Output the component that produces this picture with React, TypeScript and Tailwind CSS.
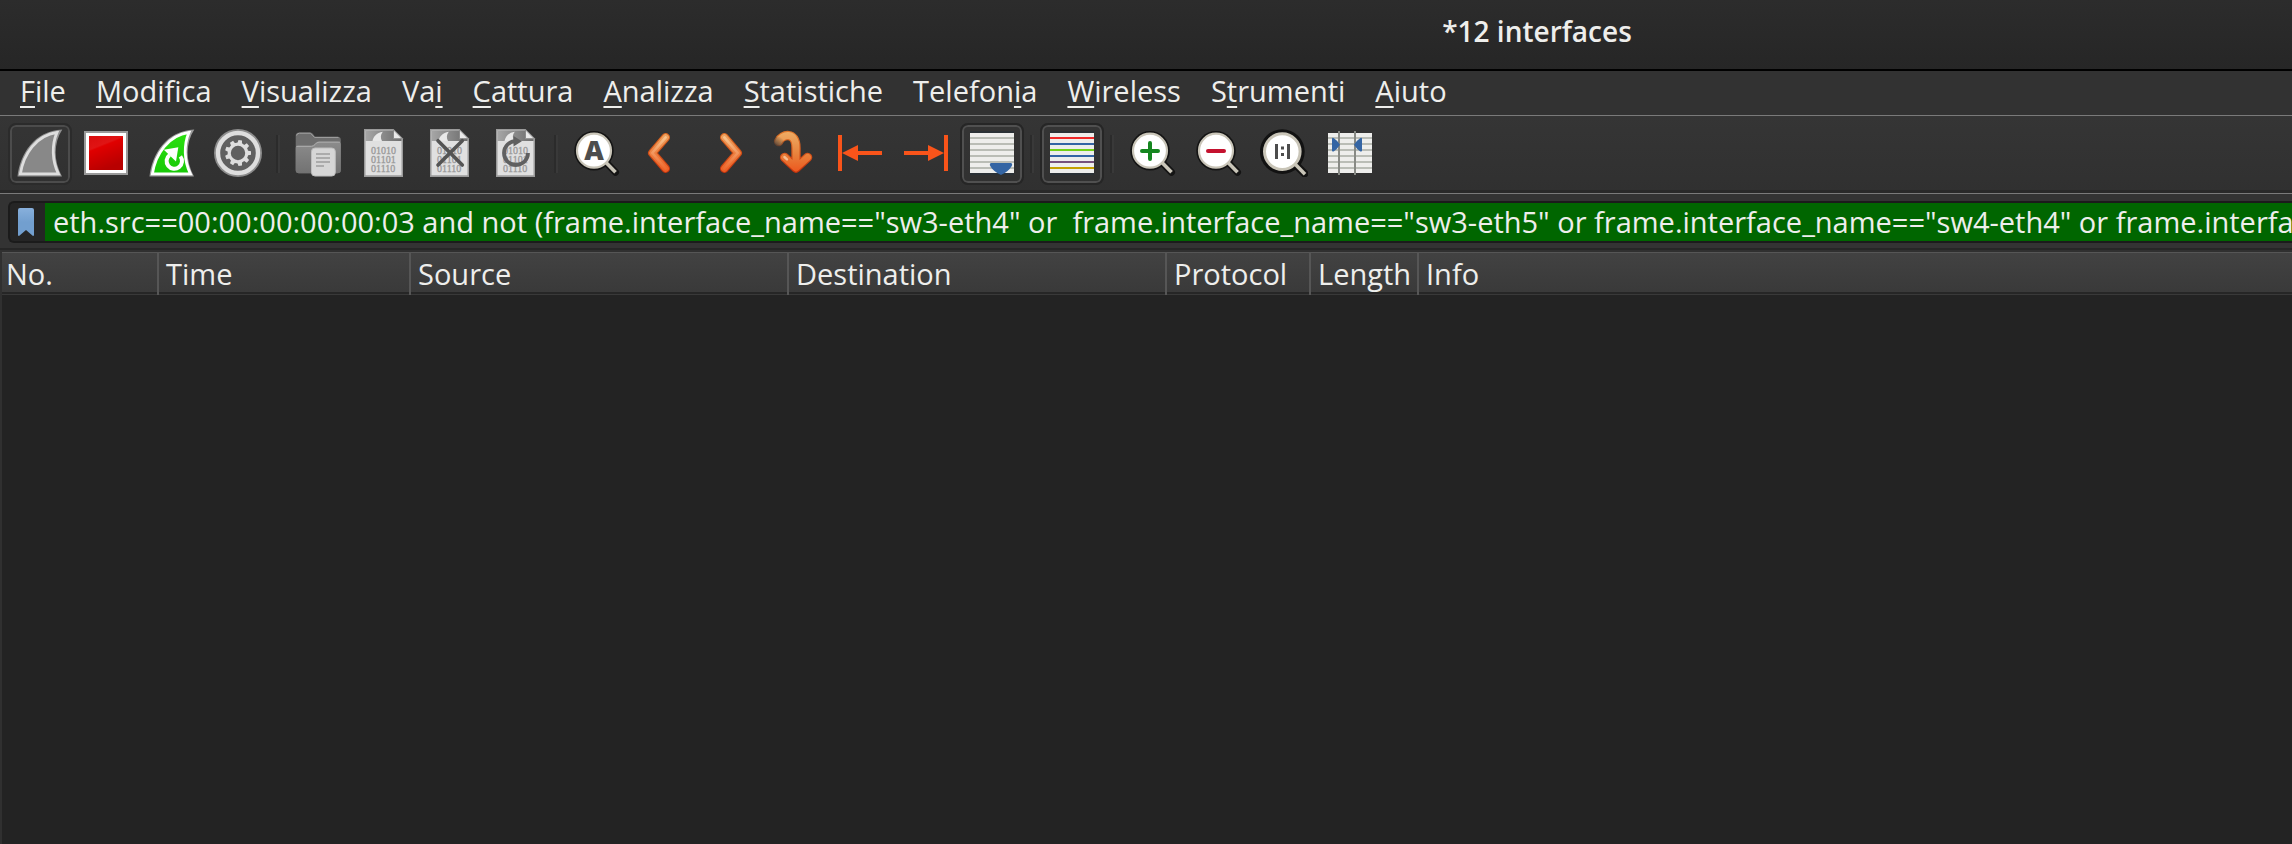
import React from "react";

type IconProps = { children: React.ReactNode };

function Icon({ children }: IconProps) {
  return (
    <svg viewBox="0 0 48 48" className="size-12 shrink-0" aria-hidden="true">
      {children}
    </svg>
  );
}

const FIN = "M1.5 47.5 C4 25 18 2 46.3 0.5 C37.5 14 37.5 32 46 47.5 Z";
const FIN_INNER = "M4.4 44.8 C7.5 25 20 6.5 41 3.4 C35.6 16 36 31.5 42.4 44.8 Z";

function StartIcon() {
  return (
    <Icon>
      <path d={FIN} fill="#8f8f8f" />
      <path d={FIN_INNER} fill="#888888" stroke="#dedede" strokeWidth="2.8" />
    </Icon>
  );
}

function StopIcon() {
  return (
    <Icon>
      <defs>
        <linearGradient id="stop" x1="0" y1="0" x2="0.4" y2="1">
          <stop offset="0" stopColor="#d90d0d" />
          <stop offset="0.35" stopColor="#e01414" />
          <stop offset="0.4" stopColor="#e00000" />
          <stop offset="1" stopColor="#b80000" />
        </linearGradient>
      </defs>
      <rect x="2" y="2" width="44" height="44" fill="#9a9a9a" />
      <rect x="4" y="4" width="40" height="40" fill="#ffffff" />
      <rect x="7" y="7" width="34" height="34" fill="url(#stop)" />
    </Icon>
  );
}

function RestartIcon() {
  return (
    <Icon>
      <defs>
        <linearGradient id="restart" x1="0" y1="0" x2="0" y2="1">
          <stop offset="0" stopColor="#2be010" />
          <stop offset="1" stopColor="#18c808" />
        </linearGradient>
      </defs>
      <path d={FIN} fill="#9a9a9a" />
      <path d={FIN_INNER} fill="url(#restart)" stroke="#ffffff" strokeWidth="2.8" />
      <path d="M21.6 26 A7.7 7.7 0 1 0 32.4 27.4" fill="none" stroke="#ffffff" strokeWidth="4" />
      <path d="M15.8 20.8 L30.3 18.2 L28 32.4 Z" fill="#ffffff" />
    </Icon>
  );
}

const TEETH = [0, 40, 80, 120, 160, 200, 240, 280, 320];

function OptionsIcon() {
  return (
    <Icon>
      <circle cx="24" cy="24" r="24" fill="#8c8c8c" />
      <circle cx="24" cy="24" r="20" fill="#606060" stroke="#dedede" strokeWidth="4.4" />
      <g fill="#dedede">
        {TEETH.map((angle) => (
          <path key={angle} d="M21.6 15 L22.2 11 H25.8 L26.4 15 Z" transform={`rotate(${angle + 10} 24 24)`} />
        ))}
      </g>
      <circle cx="24" cy="24" r="8.8" fill="#606060" stroke="#dedede" strokeWidth="3.2" />
    </Icon>
  );
}

function OpenIcon() {
  return (
    <Icon>
      <defs>
        <linearGradient id="folder" x1="0" y1="0" x2="0" y2="1">
          <stop offset="0" stopColor="#8c8c8c" />
          <stop offset="1" stopColor="#727272" />
        </linearGradient>
      </defs>
      <path
        d="M1.7 7 Q1.7 3.5 5 3.5 H16.5 Q18 3.5 19 5 L21 7.7 H43.5 Q46.8 7.7 46.8 11 V41 Q46.8 44.3 43.5 44.3 H5 Q1.7 44.3 1.7 41 Z"
        fill="#6e6e6e"
      />
      <path d="M2.6 6.5 Q3 4.2 5.5 4.2 H16.5 L20.5 8.4 H44.5" fill="none" stroke="#a2a2a2" strokeWidth="1" />
      <path
        d="M1.7 19 Q1.7 16.5 4.5 16.5 H17 Q19 16.5 20.5 15 L22 13.5 Q23.2 12.4 25 12.4 H43.5 Q46.8 12.4 46.8 15.5 V41 Q46.8 44.3 43.5 44.3 H5 Q1.7 44.3 1.7 41 Z"
        fill="url(#folder)"
      />
      <path d="M2.4 17.4 H17.5 Q19.5 17.2 21 15.6 Q22.5 13.2 25 13.2 H46" fill="none" stroke="#acacac" strokeWidth="1" />
      <rect x="17.5" y="19" width="23.8" height="28" rx="3.5" fill="#d6d6d6" stroke="#bdbdbd" strokeWidth="1" />
      <path d="M22 25 H36 M22 29 H36 M22 33 H36 M22 37 H30" stroke="#ababab" strokeWidth="2" />
    </Icon>
  );
}

function FileIcon({ children, id }: { children?: React.ReactNode; id: string }) {
  return (
    <Icon>
      <defs>
        <linearGradient id={id} x1="0" y1="0" x2="1" y2="0">
          <stop offset="0" stopColor="#a6a6a6" />
          <stop offset="1" stopColor="#6c6c6c" />
        </linearGradient>
      </defs>
      <path d="M4 0 H33.5 L43 9.5 V48 H4 Z" fill="#9b9b9b" />
      <path d="M5.5 1.5 H33 L41.5 10 V46.3 H5.5 Z" fill="#e0e0e0" />
      <path d="M5.5 1.5 H33 L41.5 10 V12 H5.5 Z" fill={`url(#${id})`} />
      <path d="M12.5 12 C13.2 8 16.5 3.4 22.8 2.7 C20.4 5.5 20.4 9 22 12 Z" fill="#e8e8e8" />
      <path d="M33.5 0.8 V9.7 H42.3 Z" fill="#eaeaea" stroke="#8b8b8b" strokeWidth="1" />
      <g fill="#9a9a9a" stroke="#9a9a9a" strokeWidth="0.3" fontSize="10" fontFamily="'Liberation Serif', serif">
        <text x="11" y="24.5">01010</text>
        <text x="11" y="33.5">01101</text>
        <text x="11" y="42.5">01110</text>
      </g>
      {children}
    </Icon>
  );
}

function Lens({ children }: IconProps) {
  return (
    <Icon>
      <path d="M35 34.5 L43.5 43.2" stroke="#141414" strokeWidth="7" strokeLinecap="round" />
      <circle cx="22" cy="21.7" r="19.7" fill="#141414" />
      <path d="M34 33.5 L43.5 43.2" stroke="#c9c5b8" strokeWidth="3.6" />
      <circle cx="22" cy="21.7" r="17" fill="#ffffff" stroke="#c9c5b8" strokeWidth="2.2" />
      {children}
    </Icon>
  );
}

function NormalSizeIcon() {
  return (
    <Icon>
      <path d="M36 36 L44.6 44.6" stroke="#121212" strokeWidth="7.6" strokeLinecap="round" />
      <circle cx="22.3" cy="22.6" r="22.4" fill="#121212" />
      <path d="M35 35 L45 45.2" stroke="#c9c5b8" strokeWidth="3.6" />
      <circle cx="22.3" cy="22.6" r="17.8" fill="#ffffff" stroke="#c9c5b8" strokeWidth="3" />
      <path d="M15 15 h3 v15 h-3 Z M27 15 h3 v15 h-3 Z M21 17.6 h3 v3 h-3 Z M21 24 h3 v3 h-3 Z" fill="#4d4d4d" />
    </Icon>
  );
}

function ArrowStroke({ d, id }: { d: string; id: string }) {
  return (
    <Icon>
      <defs>
        <linearGradient id={id} gradientUnits="userSpaceOnUse" x1="0" y1="4" x2="0" y2="44">
          <stop offset="0" stopColor="#eda662" />
          <stop offset="1" stopColor="#ec5a20" />
        </linearGradient>
        <linearGradient id={`${id}-edge`} gradientUnits="userSpaceOnUse" x1="0" y1="4" x2="0" y2="44">
          <stop offset="0" stopColor="#d9661f" />
          <stop offset="1" stopColor="#c4330d" />
        </linearGradient>
        <linearGradient id={`${id}-shine`} gradientUnits="userSpaceOnUse" x1="0" y1="4" x2="0" y2="40">
          <stop offset="0" stopColor="#f8cf9a" />
          <stop offset="1" stopColor="#ee6a30" />
        </linearGradient>
      </defs>
      <g fill="none" strokeLinecap="round" strokeLinejoin="round">
        <path d={d} stroke={`url(#${id}-edge)`} strokeWidth="8.6" />
        <path d={d} stroke={`url(#${id})`} strokeWidth="6.4" />
        <path d={d} stroke={`url(#${id}-shine)`} strokeWidth="2.6" />
      </g>
    </Icon>
  );
}

function GoToIcon() {
  return (
    <Icon>
      <defs>
        <linearGradient id="goto" gradientUnits="userSpaceOnUse" x1="0" y1="4" x2="0" y2="42">
          <stop offset="0" stopColor="#eeaa62" />
          <stop offset="0.55" stopColor="#e8823c" />
          <stop offset="1" stopColor="#ec5a20" />
        </linearGradient>
        <linearGradient id="goto-edge" gradientUnits="userSpaceOnUse" x1="0" y1="4" x2="0" y2="42">
          <stop offset="0" stopColor="#dd7428" />
          <stop offset="1" stopColor="#c4330d" />
        </linearGradient>
        <linearGradient id="goto-tail" gradientUnits="userSpaceOnUse" x1="5" y1="18" x2="12" y2="9">
          <stop offset="0.1" stopColor="#343434" stopOpacity="0.85" />
          <stop offset="1" stopColor="#343434" stopOpacity="0" />
        </linearGradient>
      </defs>
      <g fill="none" strokeLinecap="round" strokeLinejoin="round">
        <path d="M14.6 28.4 L26 39 L37.6 28.4 M26 38 V19 C26 2 12 5 8.6 12.6" stroke="url(#goto-edge)" strokeWidth="9.4" />
        <path d="M14.6 28.4 L26 39 L37.6 28.4 M26 38 V19 C26 2 12 5 8.6 12.6" stroke="url(#goto)" strokeWidth="7" />
        <path d="M14.4 28 L17 30.4" stroke="#f6bd92" strokeWidth="2.4" />
      </g>
      <circle cx="8" cy="13.5" r="6" fill="url(#goto-tail)" />
    </Icon>
  );
}

const GRAY_LINES = ["#babdb6", "#babdb6", "#babdb6", "#babdb6", "#babdb6", "#babdb6"];
const COLOR_LINES = ["#ef2929", "#3465a4", "#73d216", "#3465a4", "#75507b", "#c4a000"];

function ListSheet({ lines, framed }: { lines: string[]; framed?: boolean }) {
  return (
    <>
      {framed && <rect x="2" y="2" width="44" height="44" fill="#2b3136" />}
      <rect x="2" y="4" width="44" height="40" fill="#eeeeec" />
      {lines.map((color, i) => (
        <rect key={i} x="2" y={8 + i * 6} width="44" height="2" fill={color} />
      ))}
    </>
  );
}

function ToolButton({ label, pressed, children }: { label: string; pressed?: boolean; children: React.ReactNode }) {
  return (
    <button
      type="button"
      aria-label={label}
      aria-pressed={pressed}
      className={
        pressed
          ? "flex h-[62px] w-16 shrink-0 items-center justify-center rounded-lg border-2 border-[#262626] pb-[2px] shadow-[inset_0_0_0_2px_#505050]"
          : "flex h-[62px] w-16 shrink-0 items-center justify-center pb-[2px]"
      }
    >
      {children}
    </button>
  );
}

function StartButton() {
  return (
    <button
      type="button"
      aria-label="Start capture"
      className="flex h-[62px] w-16 shrink-0 items-center justify-center rounded-lg border-2 border-[#2b2b2b] pb-[2px] shadow-[inset_0_0_0_2px_#4c4c4c]"
    >
      <StartIcon />
    </button>
  );
}

function Separator() {
  return <div className="mx-1 h-[38px] w-1 shrink-0 border-r-2 border-l-2 border-r-[#393939] border-l-[#2b2b2b]" />;
}

const MENUS: [string, string, string][] = [
  ["", "F", "ile"],
  ["", "M", "odifica"],
  ["", "V", "isualizza"],
  ["Va", "i", ""],
  ["", "C", "attura"],
  ["", "A", "nalizza"],
  ["", "S", "tatistiche"],
  ["Telefon", "i", "a"],
  ["", "W", "ireless"],
  ["S", "t", "rumenti"],
  ["", "A", "iuto"],
];

const COLUMNS: { name: string; width: string }[] = [
  { name: "No.", width: "w-[156px]" },
  { name: "Time", width: "w-[252px]" },
  { name: "Source", width: "w-[378px]" },
  { name: "Destination", width: "w-[378px]" },
  { name: "Protocol", width: "w-[144px]" },
  { name: "Length", width: "w-[108px]" },
  { name: "Info", width: "" },
];

const FILTER =
  'eth.src==00:00:00:00:00:03 and not (frame.interface_name=="sw3-eth4" or  frame.interface_name=="sw3-eth5" or frame.interface_name=="sw4-eth4" or frame.interface_name=="sw4-eth5")';

export default function App() {
  return (
    <div className="flex min-h-screen flex-col overflow-hidden bg-[#232323] font-['Open_Sans','Noto_Sans',sans-serif] text-[29px] leading-9 text-[#eeeeec]">
      <header className="border-b-2 border-black bg-linear-to-b from-[#2c2c2c] to-[#262626] pt-[13px] pb-5 pl-[782px] text-center">
        <h1 className="text-[28px] leading-9 font-semibold">*12 interfaces</h1>
      </header>

      <nav className="flex h-11 items-center bg-[#323232] px-[5px] pb-1">
        {MENUS.map(([before, key, after]) => (
          <button key={before + key + after} type="button" className="shrink-0 px-[15px] whitespace-nowrap">
            {before}
            <span className="underline decoration-2 underline-offset-4">{key}</span>
            {after}
          </button>
        ))}
      </nav>

      <div
        role="toolbar"
        aria-label="Main toolbar"
        className="flex items-center gap-[2px] border-t border-b border-[#7a7a7a] bg-linear-to-b from-[#353535] to-[#303030] px-2 pt-[7px] pb-2 shadow-[inset_0_-3px_0_#292929]"
      >
        <StartButton />
        <ToolButton label="Stop capture"><StopIcon /></ToolButton>
        <ToolButton label="Restart capture"><RestartIcon /></ToolButton>
        <ToolButton label="Capture options"><OptionsIcon /></ToolButton>
        <Separator />
        <ToolButton label="Open"><OpenIcon /></ToolButton>
        <ToolButton label="Save"><FileIcon id="save" /></ToolButton>
        <ToolButton label="Close file">
          <FileIcon id="close">
            <path d="M12 11.7 L36.3 36 M36.3 11.7 L12 36" stroke="#545454" strokeWidth="3.6" strokeLinecap="round" />
          </FileIcon>
        </ToolButton>
        <ToolButton label="Reload file">
          <FileIcon id="reload">
            <path d="M36 24 A12 12 0 1 1 24 12" fill="none" stroke="#606060" strokeWidth="3.8" />
            <path d="M21.5 7 L29.8 12.2 L21.5 17.4 Z" fill="#606060" />
          </FileIcon>
        </ToolButton>
        <Separator />
        <ToolButton label="Find">
          <Lens>
            <text x="22" y="31" textAnchor="middle" fontSize="27" fontWeight="800" fontFamily="'Open Sans', sans-serif" fill="#4d4d4d">
              A
            </text>
          </Lens>
        </ToolButton>
        <ToolButton label="Previous packet"><ArrowStroke id="prev" d="M27.7 8.4 L14.3 24 L27.7 39.6" /></ToolButton>
        <ToolButton label="Next packet"><ArrowStroke id="next" d="M20.3 8.4 L33.7 24 L20.3 39.6" /></ToolButton>
        <ToolButton label="Go to packet"><GoToIcon /></ToolButton>
        <ToolButton label="First packet">
          <Icon>
            <path d="M2 6 H6 V42 H2 Z M6 24 L22 16 V22 H46 V26 H22 V32 Z" fill="#f9541a" />
          </Icon>
        </ToolButton>
        <ToolButton label="Last packet">
          <Icon>
            <path d="M46 6 H42 V42 H46 Z M42 24 L26 16 V22 H2 V26 H26 V32 Z" fill="#f9541a" />
          </Icon>
        </ToolButton>
        <ToolButton label="Auto scroll" pressed>
          <Icon>
            <ListSheet lines={GRAY_LINES} framed />
            <path d="M23 34 H43 Q45 35 43.6 37.2 Q40.5 42.5 33 46 Q25.5 42.5 22.4 37.2 Q21 35 23 34 Z" fill="#3465a4" />
          </Icon>
        </ToolButton>
        <Separator />
        <ToolButton label="Colorize" pressed>
          <Icon>
            <ListSheet lines={COLOR_LINES} framed />
          </Icon>
        </ToolButton>
        <Separator />
        <ToolButton label="Zoom in">
          <Lens>
            <path d="M14 22 H30 M22 14 V30" stroke="#15861f" strokeWidth="4" strokeLinecap="round" />
          </Lens>
        </ToolButton>
        <ToolButton label="Zoom out">
          <Lens>
            <path d="M14 22 H30" stroke="#c4122f" strokeWidth="4" strokeLinecap="round" />
          </Lens>
        </ToolButton>
        <ToolButton label="Normal size"><NormalSizeIcon /></ToolButton>
        <ToolButton label="Resize columns">
          <Icon>
            <ListSheet lines={GRAY_LINES} />
            <path d="M13 2 V46 M29 2 V46" stroke="#888a85" strokeWidth="2" />
            <path d="M6 10 Q6 8.4 7.6 9 Q11.5 11.5 14 15.8 Q11.5 20 7.6 22.4 Q6 23 6 21.4 Z" fill="#3465a4" />
            <path d="M36 10 Q36 8.4 34.4 9 Q30.5 11.5 28 15.8 Q30.5 20 34.4 22.4 Q36 23 36 21.4 Z" fill="#3465a4" />
          </Icon>
        </ToolButton>
      </div>

      <div className="bg-[#333333] pt-[7px] pb-[5px] pl-2">
        <div className="flex h-[42px] rounded-l-md border-2 border-r-0 border-[#1b1b1b] bg-[#252525]">
          <button type="button" aria-label="Filter bookmarks" className="flex w-[35px] shrink-0 items-center pl-2">
            <svg viewBox="0 0 16 28" className="h-7 w-4" aria-hidden="true">
              <defs>
                <linearGradient id="bookmark" x1="0" y1="0" x2="0" y2="1">
                  <stop offset="0" stopColor="#88b0dc" />
                  <stop offset="0.5" stopColor="#729fcf" />
                </linearGradient>
              </defs>
              <path d="M0 2 Q0 0 2 0 H14 Q16 0 16 2 V27 Q16 28 15 28 L8 22 L1 28 Q0 28 0 27 Z" fill="url(#bookmark)" />
            </svg>
          </button>
          <input
            type="text"
            aria-label="Display filter"
            defaultValue={FILTER}
            spellCheck={false}
            className="min-w-0 flex-1 bg-[#006600] pl-2 outline-none"
          />
        </div>
      </div>

      <main className="flex flex-1 flex-col border-t-2 border-[#262626] bg-[#303030] pt-[2px]">
        <div className="flex-1 border-l-2 border-[#303030] bg-[#232323]">
          <table className="w-full table-fixed border-collapse">
            <thead>
              <tr className="h-[43px] bg-linear-to-b from-[#424242] to-[#393939] shadow-[inset_0_1px_0_#565656,inset_0_-1px_0_#393939,inset_0_-3px_0_#262626]">
                {COLUMNS.map(({ name, width }) => (
                  <th
                    key={name}
                    scope="col"
                    className={`${width} border-r-2 border-[#565656] p-0 pl-[7px] text-left font-normal whitespace-nowrap first:pl-1 last:border-r-0`}
                  >
                    {name}
                  </th>
                ))}
              </tr>
            </thead>
            <tbody />
          </table>
        </div>
      </main>
    </div>
  );
}
